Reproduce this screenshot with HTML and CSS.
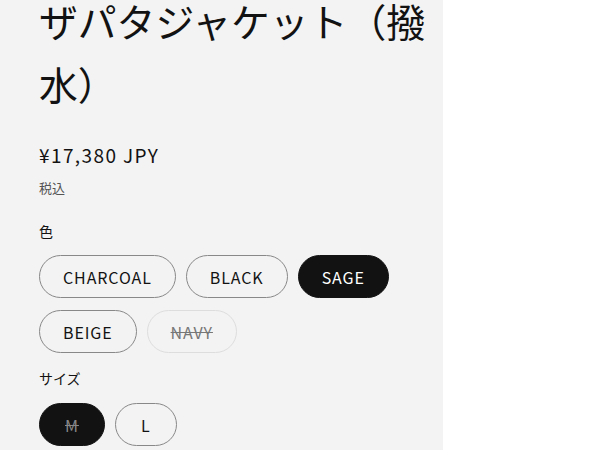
FILE: index.html
```html
<!DOCTYPE html>
<html lang="ja">
<head>
    <meta charset="UTF-8">
    <meta name="viewport" content="width=device-width, initial-scale=1.0">
    <title>ザパタジャケット（撥水）</title>
    <link rel="stylesheet" href="styles.css">
</head>
<body>

    <!-- Product info -->
    <div class="product-info">
        <h1 class="product-title">ザパタジャケット（撥水）</h1>

        <div class="price">¥17,380 JPY</div>
        <div class="tax-note">税込</div>

        <!-- Colour picker -->
        <div class="variant-group">
            <div class="variant-label">色</div>
            <div class="pill-list">
                <button type="button" class="pill">CHARCOAL</button>
                <button type="button" class="pill">BLACK</button>
                <button type="button" class="pill selected">SAGE</button>
                <button type="button" class="pill">BEIGE</button>
                <button type="button" class="pill sold-out">NAVY</button>
            </div>
        </div>

        <!-- Size picker -->
        <div class="variant-group size-group">
            <div class="variant-label">サイズ</div>
            <div class="pill-list">
                <button type="button" class="pill selected sold-out">M</button>
                <button type="button" class="pill">L</button>
            </div>
        </div>
    </div>

</body>
</html>
```

FILE: styles.css
```css
body {
    font-family: "Noto Sans CJK JP", "Noto Sans", sans-serif;
    margin: 0;
    padding: 0;
    background: #fff;
    color: #121212;
    overflow: hidden;
}
.product-info {
    display: flow-root;
    width: 443px;
    height: 450px;
    box-sizing: border-box;
    padding-left: 39px;
    background: #f3f3f3;
}
.product-title {
    margin: -11px 0 0;
    font-size: 38.8px;
    font-weight: 400;
    line-height: 63px;
}
.price {
    margin-top: 27px;
    font-size: 19px;
    letter-spacing: 1.4px;
    line-height: 26px;
}
.tax-note {
    margin-top: 10px;
    font-size: 13px;
    color: #555;
    line-height: 20px;
}
.variant-label {
    margin-top: 22px;
    margin-bottom: 13px;
    font-size: 14px;
    line-height: 22px;
}
.size-group .variant-label {
    margin-top: 14px;
    margin-bottom: 14px;
}
.pill-list {
    display: flex;
    flex-wrap: wrap;
    gap: 12px 10px;
    width: 380px;
}
.pill {
    height: 43px;
    padding: 0 23px;
    font-family: inherit;
    font-size: 16px;
    letter-spacing: 0.9px;
    color: #121212;
    background: transparent;
    border: 1px solid #888;
    border-radius: 22px;
    cursor: pointer;
}
.size-group .pill {
    padding: 0 25px;
}
.pill.selected {
    background: #121212;
    border-color: #121212;
    color: #fff;
}
.pill.sold-out {
    color: #777;
    border-color: #ddd;
    text-decoration: line-through;
}
.pill.selected.sold-out {
    border-color: #121212;
    color: #888;
}
```
